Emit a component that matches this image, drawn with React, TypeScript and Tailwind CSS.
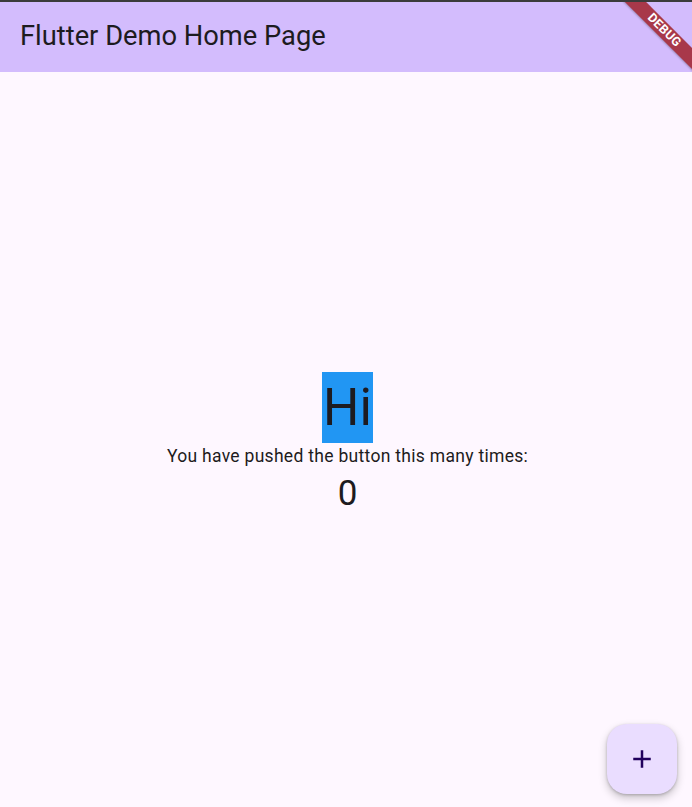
import React from "react";

const font = { fontFamily: "Roboto, 'Noto Sans', sans-serif" };

function DebugBanner() {
  return (
    <div className="pointer-events-none absolute right-0 top-0 h-[80px] w-[80px] overflow-hidden">
      <div className="absolute left-[2px] top-[21px] flex h-[15px] w-[100px] rotate-45 items-center justify-center bg-[#a8384a] shadow-[0_1px_2px_rgba(0,0,0,0.25)]">
        <span className="text-[12.5px] font-bold leading-none tracking-[0.3px] text-white">
          DEBUG
        </span>
      </div>
    </div>
  );
}

function PlusIcon() {
  return (
    <svg width="30" height="30" viewBox="0 0 24 24" fill="#21005d">
      <path d="M19 13h-6v6h-2v-6H5v-2h6V5h2v6h6v2z" />
    </svg>
  );
}

export default function App() {
  return (
    <div
      className="relative flex h-[807px] w-full flex-col overflow-hidden border-t-2 border-[#3b3b3b] bg-[#fef7ff]"
      style={font}
    >
      {/* app bar */}
      <div className="flex h-[70px] shrink-0 items-center bg-[#d3bcfd] pl-[20px]">
        <span className="text-[27.3px] leading-none text-[#1d1b20]">
          Flutter Demo Home Page
        </span>
      </div>

      {/* body */}
      <div className="flex flex-1 flex-col items-center justify-center pl-[3px] pt-[6px]">
        <div className="flex h-[71px] items-center bg-[#2196f3] px-[1px] text-[51px] leading-none text-[#1d1b20]">
          Hi
        </div>
        <div className="h-[26px] text-[17.5px] leading-[26px] tracking-[0.3px] text-[#1d1b20]">
          You have pushed the button this many times:
        </div>
        <div className="h-[45px] pt-[2px] text-[35px] leading-[45px] text-[#1d1b20]">
          0
        </div>
      </div>

      {/* fab */}
      <button className="absolute bottom-[13px] right-[15px] flex h-[70px] w-[70px] items-center justify-center rounded-[20px] bg-[#eaddff] shadow-[0_4px_8px_rgba(0,0,0,0.22),0_1px_3px_rgba(0,0,0,0.2)]">
        <PlusIcon />
      </button>

      <DebugBanner />
    </div>
  );
}
